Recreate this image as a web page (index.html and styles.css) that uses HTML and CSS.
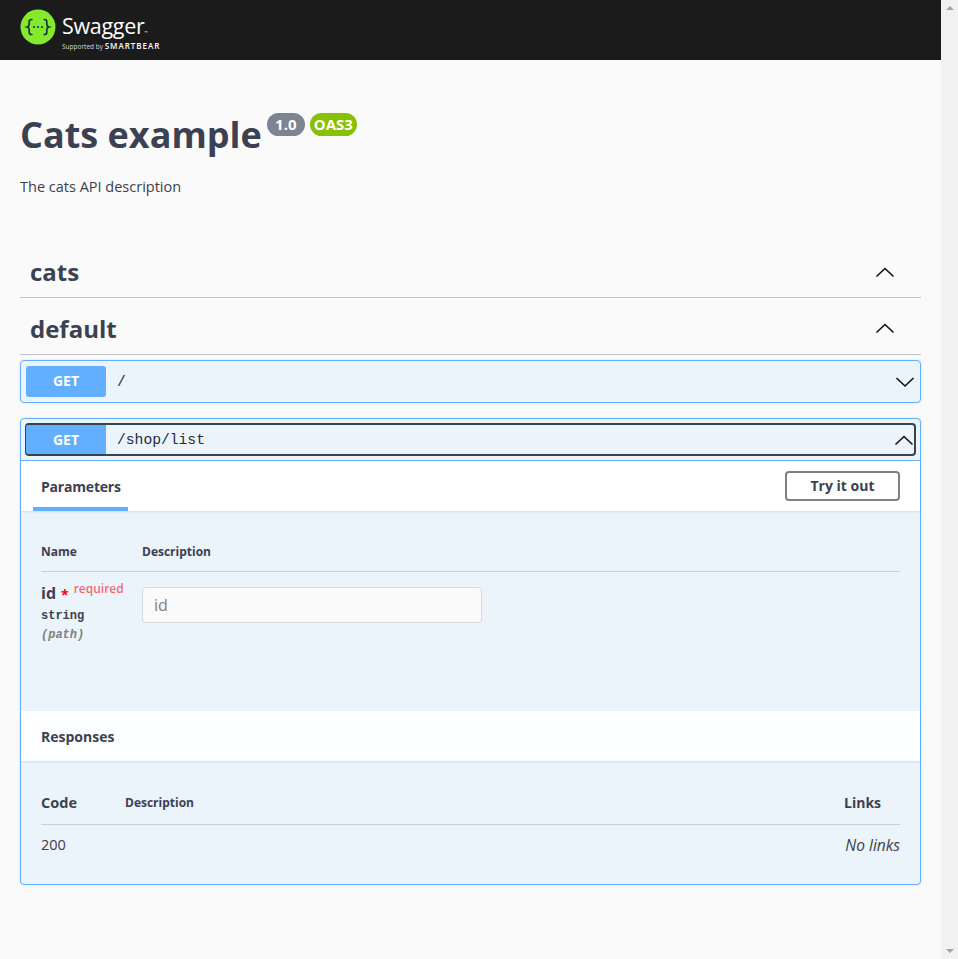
FILE: index.html
```html
<!DOCTYPE html>
<html lang="en">
<head>
    <meta charset="UTF-8">
    <meta name="viewport" content="width=device-width, initial-scale=1.0">
    <title>Swagger UI</title>
    <link rel="stylesheet" href="styles.css">
</head>
<body>

    <div class="page">
        <header class="topbar">
            <svg class="logo-mark" width="36" height="36" viewBox="0 0 36 36">
                <circle cx="18" cy="18" r="17.5" fill="#85ea2d"/>
                <path d="M12.5 10.5h-1c-1.6 0-2.3.9-2.3 2.3v2.6c0 1.4-.8 2.2-2.2 2.6 1.4.4 2.2 1.2 2.2 2.6v2.6c0 1.4.7 2.3 2.3 2.3h1" fill="none" stroke="#173647" stroke-width="1.7"/>
                <path d="M23.5 10.5h1c1.6 0 2.3.9 2.3 2.3v2.6c0 1.4.8 2.2 2.2 2.6-1.4.4-2.2 1.2-2.2 2.6v2.6c0 1.4-.7 2.3-2.3 2.3h-1" fill="none" stroke="#173647" stroke-width="1.7"/>
                <circle cx="14" cy="18" r="1.1" fill="#173647"/>
                <circle cx="18" cy="18" r="1.1" fill="#173647"/>
                <circle cx="22" cy="18" r="1.1" fill="#173647"/>
            </svg>
            <div class="logo-text">
                <div class="logo-name">Swagger<span class="logo-tm">™</span></div>
                <div class="logo-sub">Supported by <span class="logo-bear">SMARTBEAR</span></div>
            </div>
        </header>

        <main class="wrapper">
            <div class="info">
                <div class="title-row">
                    <h1>Cats example</h1>
                    <span class="badge badge-version">1.0</span>
                    <span class="badge badge-oas">OAS3</span>
                </div>
                <p class="description">The cats API description</p>
            </div>

            <div class="tag-row tag-first">
                <h3>cats</h3>
                <svg class="arrow" width="20" height="20" viewBox="0 0 20 20"><path d="M1.5 14.5L10 6.5l8.5 8" /></svg>
            </div>
            <div class="tag-row">
                <h3>default</h3>
                <svg class="arrow" width="20" height="20" viewBox="0 0 20 20"><path d="M1.5 14.5L10 6.5l8.5 8" /></svg>
            </div>

            <div class="opblock">
                <div class="summary">
                    <span class="method">GET</span>
                    <span class="path">/</span>
                    <svg class="arrow" width="20" height="20" viewBox="0 0 20 20"><path d="M1.5 6L10 14l8.5-8" /></svg>
                </div>
            </div>

            <div class="opblock opblock-open">
                <div class="summary-bar">
                    <div class="summary summary-focus">
                        <span class="method">GET</span>
                        <span class="path">/shop/list</span>
                        <svg class="arrow" width="20" height="20" viewBox="0 0 20 20"><path d="M1.5 14.5L10 6.5l8.5 8" /></svg>
                    </div>
                </div>

                <div class="section-header params-header">
                    <div class="tab">Parameters</div>
                    <button class="try-btn">Try it out</button>
                </div>
                <div class="params-body">
                    <div class="params-head">
                        <span class="col-name">Name</span>
                        <span>Description</span>
                    </div>
                    <div class="param-row">
                        <div class="col-name">
                            <div class="param-name">id <span class="star">*</span><span class="required">required</span></div>
                            <div class="param-type">string</div>
                            <div class="param-in">(path)</div>
                        </div>
                        <input class="param-input" type="text" placeholder="id">
                    </div>
                </div>

                <div class="section-header responses-header">Responses</div>
                <div class="responses-body">
                    <div class="resp-head">
                        <span class="col-code">Code</span>
                        <span class="col-desc">Description</span>
                        <span class="col-links">Links</span>
                    </div>
                    <div class="resp-row">
                        <span class="col-code">200</span>
                        <em class="no-links">No links</em>
                    </div>
                </div>
            </div>
        </main>
    </div>

    <!-- fake scrollbar, the window shows one -->
    <div class="scrollbar">
        <span class="scroll-up"></span>
        <span class="scroll-down"></span>
    </div>

</body>
</html>
```

FILE: styles.css
```css
html, body {
    height: 100%;
    overflow: hidden;
}

body {
    margin: 0;
    display: flex;
    background: #fafafa;
    color: #3b4151;
    font-family: "Open Sans", sans-serif;
}

.page {
    flex: 1;
    min-width: 0;
}

/* Top bar */
.topbar {
    height: 60px;
    background: #1b1b1b;
    padding: 9px 0 0 20px;
    box-sizing: border-box;
    display: flex;
    gap: 6px;
    color: white;
}

.logo-mark {
    flex: none;
}

.logo-name {
    font-size: 21.5px;
    font-weight: 400;
    line-height: 34px;
    height: 32px;
    letter-spacing: -0.3px;
}

.logo-tm {
    font-size: 4px;
    vertical-align: baseline;
}

.logo-sub {
    font-size: 6.5px;
    line-height: 9px;
    height: 10px;
    color: #d8d8d8;
    white-space: nowrap;
}

.logo-bear {
    font-size: 8px;
    font-weight: 600;
    letter-spacing: 1px;
    color: white;
}

.wrapper {
    padding: 0 20px;
}

/* Title block */
.info {
    height: 186px;
    padding-top: 50px;
    box-sizing: border-box;
}

.title-row {
    display: flex;
    align-items: flex-start;
}

h1 {
    margin: 0;
    font-size: 36px;
    font-weight: 700;
    line-height: 50px;
}

.badge {
    height: 23px;
    border-radius: 12px;
    color: white;
    font-size: 15px;
    font-weight: 700;
    line-height: 23px;
    text-align: center;
    margin-top: 3px;
}

.badge-version {
    width: 38px;
    margin-left: 5px;
    background: #7d8492;
}

.badge-oas {
    width: 47px;
    margin-left: 5px;
    background: #89bf04;
}

.description {
    margin: 16px 0 0;
    font-size: 14.5px;
    line-height: 21px;
}

/* Tag rows */
.tag-row {
    height: 57px;
    box-sizing: border-box;
    border-bottom: 1px solid #c4c4c6;
    display: flex;
    align-items: center;
    justify-content: space-between;
    padding: 4px 26px 0 10px;
}

.tag-first {
    height: 52px;
    padding-top: 0;
}

h3 {
    margin: 0;
    font-size: 24px;
    font-weight: 700;
}

.arrow {
    flex: none;
}

.arrow path {
    fill: none;
    stroke: #111;
    stroke-width: 1.6;
}

/* Operation blocks */
.opblock {
    margin-top: 5px;
    border: 1px solid #61affe;
    border-radius: 4px;
    background: #ebf3fb;
    box-shadow: 0 0 3px rgba(0, 0, 0, 0.1);
}

.opblock-open {
    margin-top: 15px;
}

.summary {
    height: 31px;
    display: flex;
    align-items: center;
    padding: 5px;
}

.summary-bar {
    padding: 4px;
    border-bottom: 1px solid #61affe;
}

.summary-focus {
    box-sizing: border-box;
    padding: 0;
    height: 33px;
    border: 2px solid #3b4151;
    border-radius: 4px;
}

.method {
    width: 80px;
    height: 31px;
    flex: none;
    background: #61affe;
    border-radius: 3px;
    color: white;
    font-size: 14px;
    font-weight: 700;
    line-height: 30px;
    text-align: center;
}

.summary-focus .method {
    height: 29px;
    line-height: 29px;
    margin-left: -1px;
    border-radius: 2px 0 0 2px;
}

.path {
    flex: 1;
    padding-left: 11px;
    font-family: "Liberation Mono", monospace;
    font-size: 14.67px;
    color: #262b38;
}

/* Section headers */
.section-header {
    background: rgba(255, 255, 255, 0.9);
    box-shadow: 0 1px 2px rgba(0, 0, 0, 0.1);
    font-size: 14px;
    font-weight: 700;
}

.params-header {
    height: 50px;
    display: flex;
    justify-content: space-between;
    padding: 0 20px 0 12px;
    background: white;
}

.tab {
    width: 95px;
    height: 50px;
    box-sizing: border-box;
    padding: 16px 0 0 8px;
    border-bottom: 4px solid #61affe;
    line-height: 20px;
    letter-spacing: -0.2px;
}

.try-btn {
    width: 115px;
    height: 30px;
    margin-top: 10px;
    padding: 0 6px 2px;
    border: 2px solid #808080;
    border-radius: 4px;
    background: white;
    color: #3b4151;
    font-family: inherit;
    font-size: 14px;
    font-weight: 700;
}

.params-body {
    height: 200px;
    box-sizing: border-box;
    padding: 30px 20px 0;
}

.params-head {
    display: flex;
    height: 30px;
    border-bottom: 1px solid rgba(59, 65, 81, 0.2);
    font-size: 12px;
    font-weight: 700;
    line-height: 22px;
}

.col-name {
    width: 101px;
    flex: none;
}

.param-row {
    display: flex;
    padding-top: 11px;
}

.param-name {
    font-size: 16px;
    font-weight: 700;
    line-height: 20px;
    display: flex;
    align-items: flex-start;
}

.star {
    color: red;
    font-size: 14px;
    margin-left: 5px;
    line-height: 24px;
}

.required {
    color: rgba(255, 0, 0, 0.6);
    font-size: 12px;
    font-weight: 600;
    line-height: 14px;
    margin: -1px 0 0 5px;
}

.param-type {
    margin-top: -1px;
    font-family: "Liberation Mono", monospace;
    font-size: 12px;
    font-weight: 700;
    line-height: 20px;
}

.param-in {
    font-family: "Liberation Mono", monospace;
    font-size: 12px;
    font-style: italic;
    font-weight: 600;
    color: gray;
    line-height: 18px;
}

.param-input {
    width: 340px;
    height: 36px;
    margin-top: 4px;
    box-sizing: border-box;
    padding: 0 11px;
    background: #fafafa;
    border: 1px solid #d9d9d9;
    border-radius: 4px;
    font-family: inherit;
    font-size: 16px;
}

.param-input::placeholder {
    color: #808080;
}

.responses-header {
    height: 50px;
    padding-left: 20px;
    line-height: 52px;
}

.responses-body {
    height: 123px;
    box-sizing: border-box;
    padding: 31px 20px 0;
}

.resp-head {
    display: flex;
    align-items: flex-start;
    height: 32px;
    border-bottom: 1px solid rgba(59, 65, 81, 0.2);
    font-weight: 700;
    font-size: 14px;
    line-height: 22px;
}

.col-code {
    width: 84px;
    flex: none;
    font-size: 14.5px;
}

.col-desc {
    flex: 1;
    font-size: 12px;
}

.col-links {
    width: 56px;
}

.resp-row {
    display: flex;
    justify-content: space-between;
    padding-top: 10px;
    font-size: 14.5px;
    line-height: 20px;
}

.no-links {
    font-size: 15.5px;
}

/* Scrollbar */
.scrollbar {
    width: 17px;
    flex: none;
    background: #f1f1f1;
    display: flex;
    flex-direction: column;
    justify-content: space-between;
    align-items: center;
    padding: 6px 0;
    box-sizing: border-box;
}

.scroll-up {
    border: 4px solid transparent;
    border-top: 0;
    border-bottom: 4px solid #a3a3a3;
}

.scroll-down {
    border: 4px solid transparent;
    border-bottom: 0;
    border-top: 4px solid #a3a3a3;
}
```
